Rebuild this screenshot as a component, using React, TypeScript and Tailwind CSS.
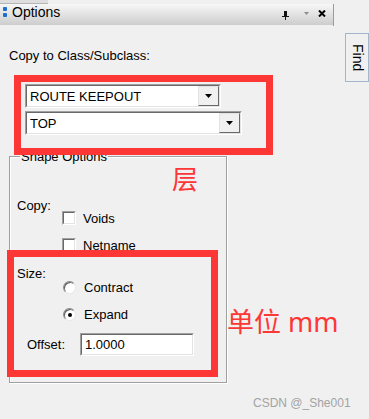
import React from "react";

function Sunken({ className, children }: { className: string; children?: React.ReactNode }) {
  // classic win32 3d sunken edge
  return (
    <div className={`border border-t-[#a0a0a0] border-l-[#a0a0a0] border-b-white border-r-white ${className}`}>
      <div className="w-full h-full border border-t-[#696969] border-l-[#696969] border-b-[#e3e3e3] border-r-[#e3e3e3] bg-white flex items-center">
        {children}
      </div>
    </div>
  );
}

function ComboBox({ value, width }: { value: string; width: string }) {
  return (
    <Sunken className={`${width} h-[24px]`}>
      <span className="flex-1 pl-[3px] leading-[15px] text-[13px]">{value}</span>
      <div className="w-[21px] h-full bg-[#f0f0f0] border border-t-[#e3e3e3] border-l-[#e3e3e3] border-b-[#696969] border-r-[#696969] flex items-center justify-center">
        <svg width="7" height="4" viewBox="0 0 7 4">
          <path d="M0 0h7L3.5 4z" fill="#000" />
        </svg>
      </div>
    </Sunken>
  );
}

function CheckBox({ label }: { label: string }) {
  return (
    <div className="flex items-center h-[14px]">
      <Sunken className="w-[14px] h-[14px]" />
      <span className="ml-[7px] leading-[15px]">{label}</span>
    </div>
  );
}

function Radio({ label, checked }: { label: string; checked?: boolean }) {
  return (
    <div className="flex items-center h-[13px]">
      <div className="w-[13px] h-[13px] rounded-full border border-t-[#8a8a8a] border-l-[#8a8a8a] border-b-[#e8e8e8] border-r-[#e8e8e8] bg-white shadow-[inset_1px_1px_0_#5a5a5a] flex items-center justify-center">
        {checked && <div className="w-[4px] h-[4px] rounded-full bg-black" />}
      </div>
      <span className="ml-[8px] leading-[15px]">{label}</span>
    </div>
  );
}

export default function App() {
  return (
    <div className="relative w-[369px] h-[419px] overflow-hidden bg-[#f0f0f0] text-[13px] text-black font-['Liberation_Sans',Arial,sans-serif]">
      {/* tab strip above */}
      <div className="w-[48px] h-[4px] bg-[#dedede] border-b border-[#b5b5b5]" />

      {/* title bar */}
      <div className="flex">
        <div className="w-[333px] h-[21px] bg-gradient-to-b from-[#f7f7f7] to-[#cdcdcd] flex items-start">
          <div className="ml-[3px] mt-[3px] flex flex-col gap-[2px]">
            <div className="w-[4px] h-[4px] rounded-[1px] bg-[#1c6fd1]" />
            <div className="w-[4px] h-[4px] rounded-[1px] bg-[#1c6fd1]" />
          </div>
          <span className="ml-[5px] mt-[1px] leading-[15px] text-[14px]">Options</span>
          <div className="ml-auto mr-[7px] mt-[5px] flex items-start">
            <svg width="7" height="9" viewBox="0 0 7 9" className="mt-[2px]">
              <path d="M2 0h3v5H2z M0 5h7v1H0z M3 6h1v3H3z" fill="#111" />
            </svg>
            <svg width="5" height="3" viewBox="0 0 5 3" className="ml-[15px] mt-[3px]">
              <path d="M0 0h5L2.5 3z" fill="#8c8c8c" />
            </svg>
            <svg width="8" height="7" viewBox="0 0 8 7" className="ml-[9px] mt-[1px]">
              <path d="M1 0.5l6 6M7 0.5l-6 6" stroke="#000" strokeWidth="2" />
            </svg>
          </div>
        </div>
        <div className="w-[1px] h-[22px] bg-[#9c9c9c]" />
      </div>

      <div className="flex">
        {/* options panel */}
        <div className="w-[334px] pt-[22px]">
          <div className="ml-[9px] h-[15px] leading-[15px]">Copy to Class/Subclass:</div>

          <div className="ml-[25px] mt-[21px] flex flex-col gap-[3px]">
            <ComboBox value="ROUTE KEEPOUT" width="w-[196px]" />
            <ComboBox value="TOP" width="w-[217px]" />
          </div>

          {/* Shape Options group */}
          <div className="ml-[9px] mt-[21px] w-[218px] h-[227px] border border-[#a0a0a0] shadow-[inset_1px_1px_0_#fff,1px_1px_0_#fff]">
            <span className="block w-fit -mt-[8px] ml-[10px] px-[1px] bg-[#f0f0f0] leading-[15px]">Shape Options</span>

            <div className="mt-[34px] ml-[7px] flex">
              <span className="w-[45px] leading-[15px]">Copy:</span>
              <div className="mt-[13px] flex flex-col gap-[13px]">
                <CheckBox label="Voids" />
                <CheckBox label="Netname" />
              </div>
            </div>

            <div className="mt-[14px] ml-[7px] flex">
              <span className="w-[46px] leading-[15px]">Size:</span>
              <div className="mt-[15px] flex flex-col gap-[14px]">
                <Radio label="Contract" />
                <Radio label="Expand" checked />
              </div>
            </div>

            <div className="mt-[12px] ml-[17px] flex items-center">
              <span className="w-[53px] leading-[15px]">Offset:</span>
              <Sunken className="w-[114px] h-[23px]">
                <span className="pl-[3px] leading-[15px]">1.0000</span>
              </Sunken>
            </div>
          </div>
        </div>

        {/* Find side tab */}
        <div className="ml-[14px] mt-[7px] w-[24px] h-[49px] border border-[#a4b6c9] bg-[#f0f0f0] flex items-center justify-center">
          <span className="[writing-mode:vertical-rl] leading-[15px] text-[14px]">Find</span>
        </div>
      </div>

      {/* annotations drawn over the screenshot */}
      <div className="absolute left-[14px] top-[75px] w-[259px] h-[80px] border-[7px] border-[#fd3636]" />
      <div className="absolute left-[7px] top-[250px] w-[211px] h-[127px] border-[7px] border-[#fd3636]" />
      <span className="absolute left-[172px] top-[165px] text-[26px] leading-none text-[#fd3636] font-['Noto_Sans_CJK_SC',sans-serif]">层</span>
      <span className="absolute left-[227px] top-[308px] text-[27px] leading-none text-[#fd3636] font-['Noto_Sans','Noto_Sans_CJK_SC',sans-serif]">单位 mm</span>
      <span className="absolute left-[253px] top-[396px] text-[12px] leading-[14px] text-[#a3a3a3]">CSDN @_She001</span>
    </div>
  );
}
